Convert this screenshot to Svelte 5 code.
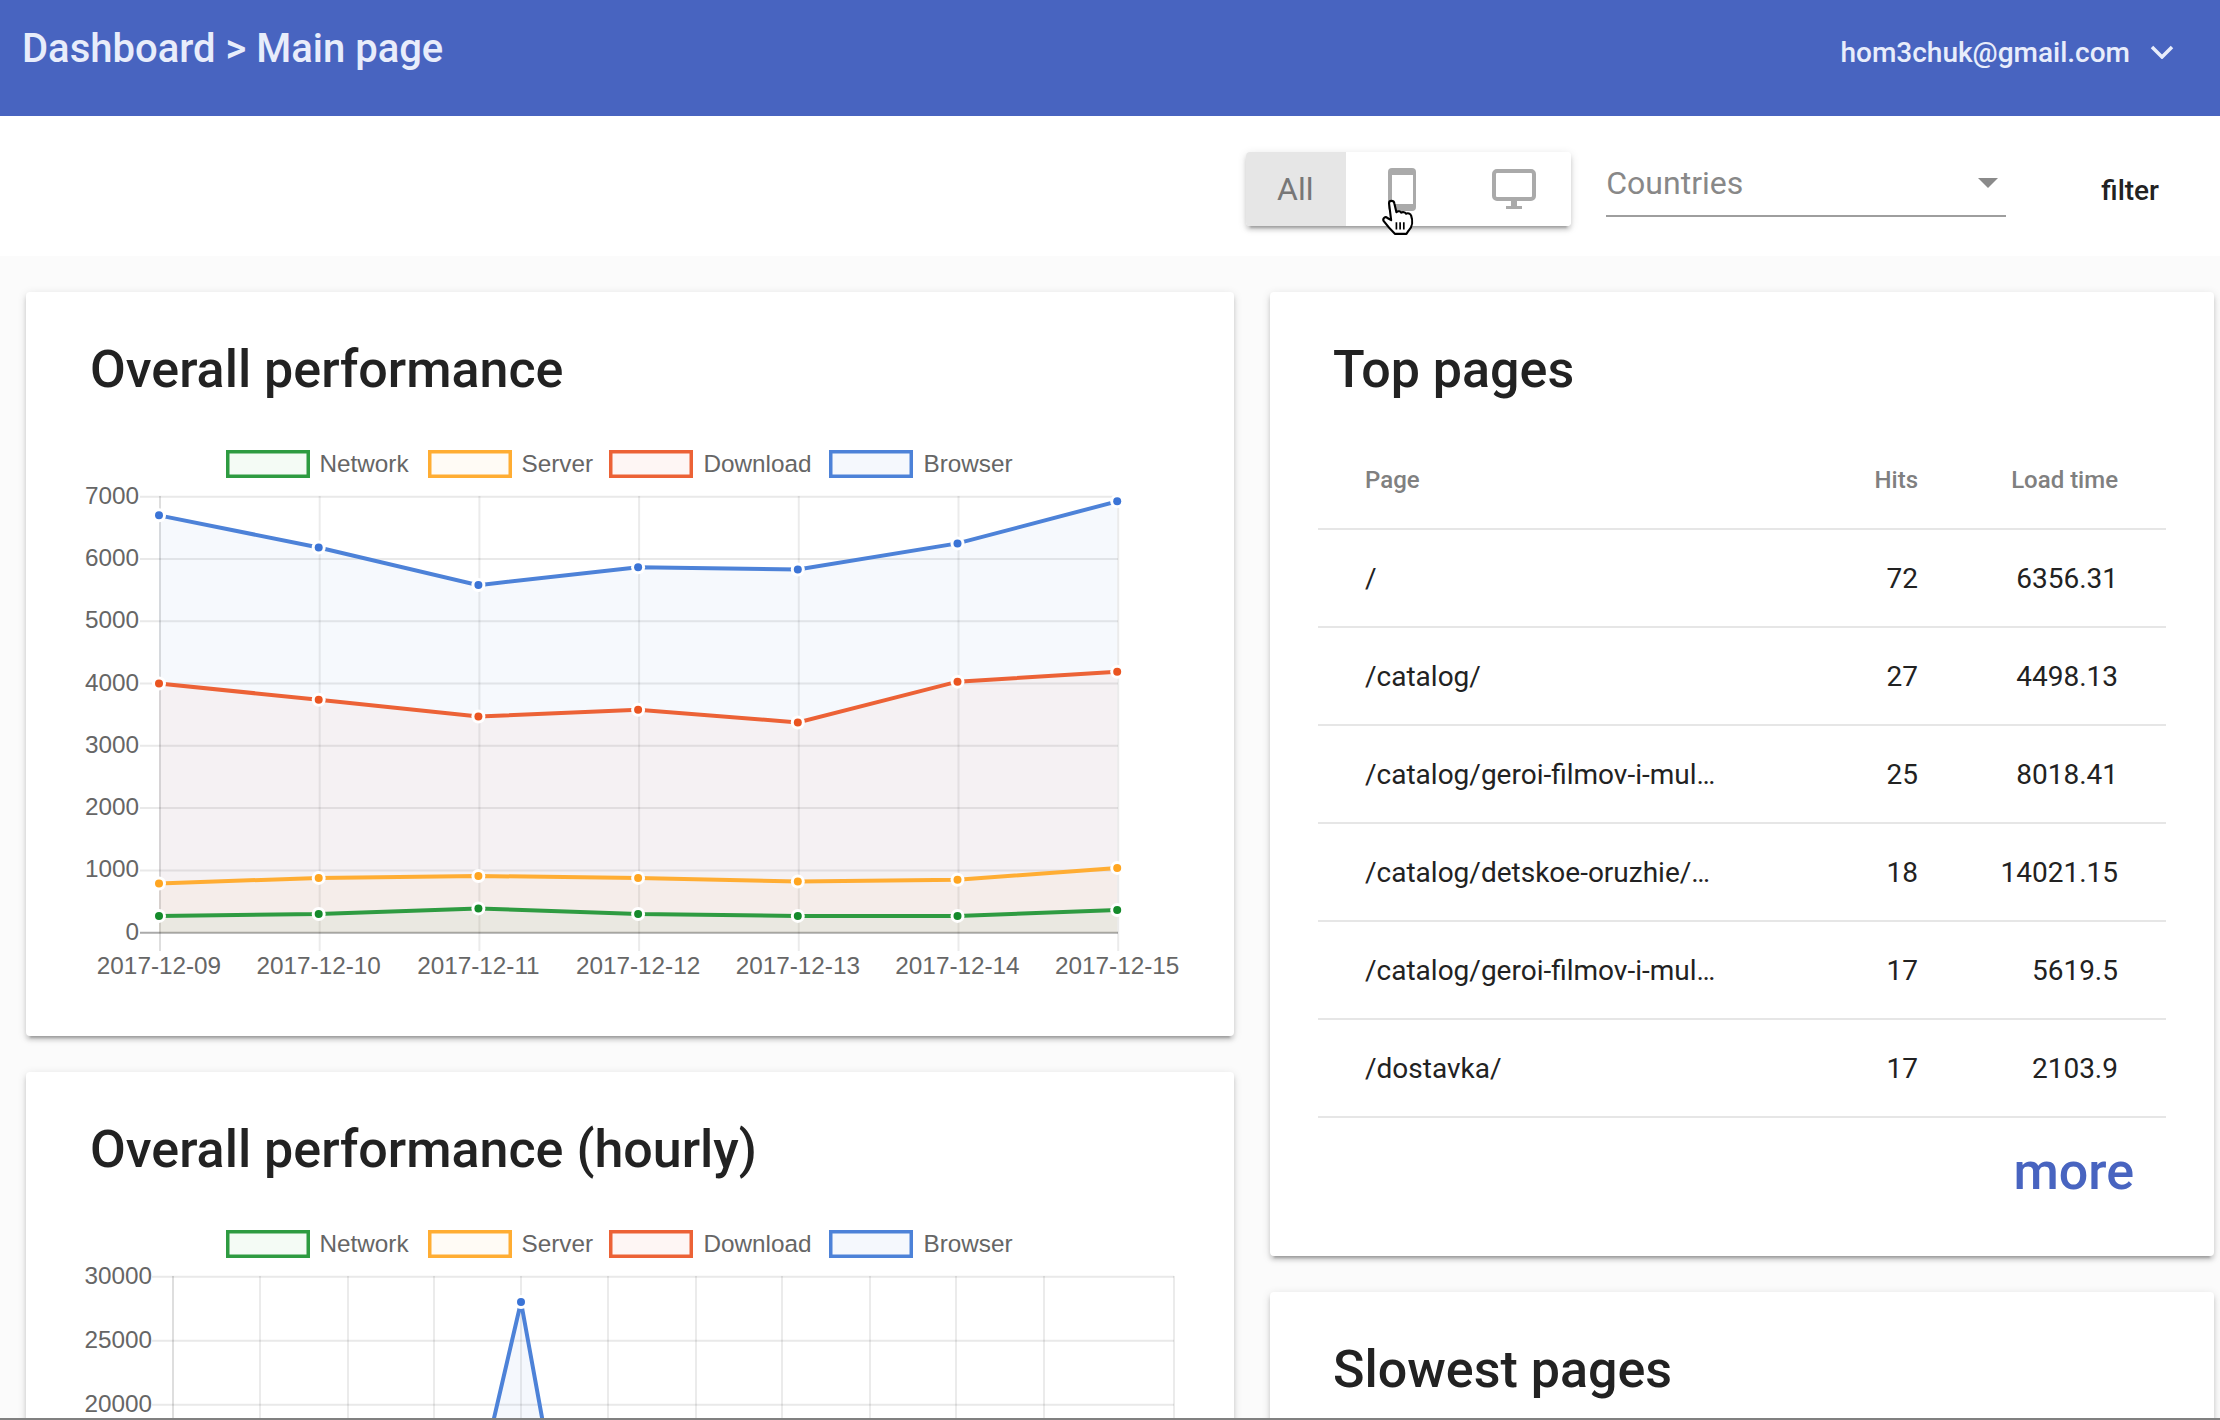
<script>
  const fechas = ['2017-12-09', '2017-12-10', '2017-12-11', '2017-12-12', '2017-12-13', '2017-12-14', '2017-12-15'];

  const series = [
    { nombre: 'Network', color: '#2e9b41', punto: '#148a2a', fondo: '#f4fbf5', valores: [270, 300, 390, 300, 270, 270, 365] },
    { nombre: 'Server', color: '#ffad33', punto: '#ffa520', fondo: '#fffbf5', valores: [790, 880, 910, 880, 820, 850, 1040] },
    { nombre: 'Download', color: '#ec6236', punto: '#ea5420', fondo: '#fef6f4', valores: [4000, 3740, 3470, 3580, 3375, 4030, 4190] },
    { nombre: 'Browser', color: '#4d82d8', punto: '#3b74d6', fondo: '#f5f8fd', valores: [6700, 6185, 5580, 5865, 5830, 6250, 6925] }
  ];

  // leyenda comun a las dos graficas
  const leyenda = [
    { caja: 200, texto: 293.5, s: series[0] },
    { caja: 402, texto: 495.5, s: series[1] },
    { caja: 583, texto: 677.5, s: series[2] },
    { caja: 803, texto: 897.5, s: series[3] }
  ];

  // grafica diaria
  const y0 = 492.7;
  const escala = 0.06229;
  const marcas = [0, 1000, 2000, 3000, 4000, 5000, 6000, 7000];
  const xDia = (i) => 134 + i * 159.7;
  const yDia = (v) => y0 - v * escala;
  const linea = (valores) => valores.map((v, i) => `${xDia(i) - 1},${yDia(v)}`).join(' ');
  const area = (valores) => `${xDia(0) - 1},${y0} ${linea(valores)} ${xDia(6) - 1},${y0}`;

  // grafica por horas
  const verticales = [147, 234, 322, 408, 495, 582, 670, 756, 844, 930, 1018, 1148];
  const marcasHora = [
    { texto: '30000', y: 56.7 },
    { texto: '25000', y: 120.7 },
    { texto: '20000', y: 184.7 }
  ];

  const filas = [
    { pagina: '/', hits: 72, tiempo: '6356.31' },
    { pagina: '/catalog/', hits: 27, tiempo: '4498.13' },
    { pagina: '/catalog/geroi-filmov-i-mul…', hits: 25, tiempo: '8018.41' },
    { pagina: '/catalog/detskoe-oruzhie/…', hits: 18, tiempo: '14021.15' },
    { pagina: '/catalog/geroi-filmov-i-mul…', hits: 17, tiempo: '5619.5' },
    { pagina: '/dostavka/', hits: 17, tiempo: '2103.9' }
  ];
</script>

<div class="page">
  <header class="topbar">
    <div class="crumbs">Dashboard &gt; Main page</div>
    <div class="user">
      <span>hom3chuk@gmail.com</span>
      <svg class="chevron" width="24" height="14" viewBox="0 0 24 14">
        <path d="M2 2 L12 12 L22 2" fill="none" stroke="#e8edfb" stroke-width="3.5" />
      </svg>
    </div>
  </header>

  <div class="toolbar">
    <div class="segments">
      <div class="seg all">All</div>
      <div class="seg">
        <svg width="28" height="43" viewBox="0 0 28 43">
          <rect width="28" height="43" rx="4" fill="#aaa" />
          <rect x="4" y="7" width="21" height="29" fill="#fff" />
        </svg>
      </div>
      <div class="seg">
        <svg width="44" height="40" viewBox="0 0 44 40">
          <rect x="2" y="2" width="40" height="28" rx="3" fill="#fff" stroke="#aaa" stroke-width="4" />
          <rect x="19" y="32" width="6" height="5" fill="#aaa" />
          <rect x="14" y="37" width="16" height="3" fill="#aaa" />
        </svg>
      </div>
    </div>
    <div class="select">
      <span>Countries</span>
      <i class="arrow"></i>
    </div>
    <button class="filter">filter</button>
  </div>

  <main class="columns">
    <div class="left">
      <section class="card daily">
        <h2>Overall performance</h2>
        <svg class="chart" width="1208" height="596" viewBox="0 0 1208 596">
          {#each leyenda as l}
            <rect x={l.caja + 1.75} y="11.75" width="80.5" height="24.5" fill={l.s.fondo} stroke={l.s.color} stroke-width="3.5" />
            <text class="lbl" x={l.texto} y="32">{l.s.nombre}</text>
          {/each}

          {#each marcas as m}
            <line x1="114" x2="1092" y1={yDia(m)} y2={yDia(m)} stroke={m === 0 ? '#aaaaaa' : '#e9e9e9'} stroke-width="2" />
            <text class="lbl" x="113" y={yDia(m) + 7} text-anchor="end">{m}</text>
          {/each}
          {#each fechas as f, i}
            <line x1={xDia(i)} x2={xDia(i)} y1="56" y2="511" stroke="#000" stroke-opacity={i === 0 ? 0.13 : 0.08} stroke-width="2" />
            <text class="lbl" x={xDia(i) - 1} y="534" text-anchor="middle">{f}</text>
          {/each}

          {#each series as s}
            <polygon points={area(s.valores)} fill={s.color} fill-opacity="0.05" />
          {/each}
          {#each series as s}
            <polyline points={linea(s.valores)} fill="none" stroke={s.color} stroke-width="4" />
            {#each s.valores as v, i}
              <circle cx={xDia(i) - 1} cy={yDia(v)} r="7" fill="#fff" />
              <circle cx={xDia(i) - 1} cy={yDia(v)} r="4" fill={s.punto} />
            {/each}
          {/each}
        </svg>
      </section>

      <section class="card hourly">
        <h2>Overall performance (hourly)</h2>
        <svg class="chart" width="1208" height="300" viewBox="0 0 1208 300">
          {#each leyenda as l}
            <rect x={l.caja + 1.75} y="11.75" width="80.5" height="24.5" fill={l.s.fondo} stroke={l.s.color} stroke-width="3.5" />
            <text class="lbl" x={l.texto} y="32">{l.s.nombre}</text>
          {/each}

          {#each marcasHora as m}
            <line x1="126" x2="1148" y1={m.y} y2={m.y} stroke="#e9e9e9" stroke-width="2" />
            <text class="lbl" x="126" y={m.y + 7} text-anchor="end">{m.texto}</text>
          {/each}
          <line x1="126" x2="1148" y1="248.7" y2="248.7" stroke="#e9e9e9" stroke-width="2" />
          {#each verticales as x, i}
            <line x1={x} x2={x} y1="56" y2="300" stroke="#000" stroke-opacity={i === 0 ? 0.13 : 0.08} stroke-width="2" />
          {/each}

          <polygon points="449,280 495,82 531,280" fill="#4d82d8" fill-opacity="0.06" />
          <polyline points="449,280 495,82 531,280" fill="none" stroke="#4d82d8" stroke-width="4" />
          <circle cx="495" cy="82" r="7" fill="#fff" />
          <circle cx="495" cy="82" r="4" fill="#3b74d6" />
        </svg>
      </section>
    </div>

    <div class="right">
      <section class="card top">
        <h2>Top pages</h2>
        <table>
          <thead>
            <tr>
              <th class="pagina">Page</th>
              <th class="num">Hits</th>
              <th class="num tiempo">Load time</th>
            </tr>
          </thead>
          <tbody>
            {#each filas as fila}
              <tr>
                <td class="pagina">{fila.pagina}</td>
                <td class="num">{fila.hits}</td>
                <td class="num tiempo">{fila.tiempo}</td>
              </tr>
            {/each}
          </tbody>
        </table>
        <div class="more"><span>more</span></div>
      </section>

      <section class="card slowest">
        <h2>Slowest pages</h2>
      </section>
    </div>
  </main>

  <!-- cursor de la captura -->
  <svg class="hand" width="34" height="38" viewBox="0 0 32 36">
    <path d="M7.5 4 C7.5 1 12 1 12.5 4 L14.5 12.5 C16 11 18.5 11.5 19 13 C20.5 12 23 12.5 23.5 14 C25 13 28 13.5 28.5 16 C30 20 30 26 26 30 L24 33 L13 33 C10 30 7 27 2.5 21 C1 18.5 4 16 6 18 L9.5 20 Z" fill="#fff" stroke="#000" stroke-width="2" stroke-linejoin="round" />
    <path d="M14.5 22 V29 M18 22 V29 M21.5 22 V29" stroke="#000" stroke-width="1.6" fill="none" />
  </svg>

  <div class="edge"></div>
</div>

<style>
  :global(body) {
    margin: 0;
    background: #fbfbfb;
  }

  .page {
    position: relative;
    height: 1420px;
    overflow: hidden;
    font-family: Roboto, sans-serif;
    background: #fbfbfb;
  }

  .topbar {
    display: flex;
    justify-content: space-between;
    height: 116px;
    background: #4864c0;
    color: #e8edfb;
    font-weight: 500;
  }

  .crumbs {
    margin: 25px 0 0 22px;
    font-size: 40px;
    line-height: 48px;
  }

  .user {
    display: flex;
    align-items: center;
    gap: 20px;
    height: 104px;
    padding-right: 46px;
    font-size: 28px;
  }

  .toolbar {
    display: flex;
    justify-content: flex-end;
    align-items: flex-start;
    height: 140px;
    padding-right: 45px;
    box-sizing: border-box;
    background: #fff;
  }

  .segments {
    display: flex;
    margin-top: 36px;
    height: 74px;
    border-radius: 4px;
    overflow: hidden;
    box-shadow: 0 4px 4px rgba(0, 0, 0, 0.14), 0 6px 2px -4px rgba(0, 0, 0, 0.2), 0 2px 10px rgba(0, 0, 0, 0.12);
  }

  .seg {
    display: flex;
    align-items: center;
    justify-content: center;
    width: 112.5px;
    padding-right: 2px;
    box-sizing: border-box;
    background: #fff;
  }

  .seg.all {
    width: 100px;
    background: #e6e6e6;
    color: #777;
    font-size: 32px;
  }

  .select {
    position: relative;
    width: 400px;
    height: 55px;
    margin: 44px 0 0 35px;
    border-bottom: 2px solid #9e9e9e;
    color: #888;
    font-size: 32px;
    line-height: 46px;
  }

  .arrow {
    position: absolute;
    right: 8px;
    top: 18px;
    width: 0;
    height: 0;
    border-left: 10px solid transparent;
    border-right: 10px solid transparent;
    border-top: 10px solid #8a8a8a;
  }

  .filter {
    margin: 49px 0 0 79px;
    padding: 0 16px;
    height: 50px;
    border: none;
    background: none;
    color: #222;
    font-family: inherit;
    font-size: 28px;
    font-weight: 500;
  }

  .columns {
    display: flex;
    gap: 36px;
    padding: 36px 6px 0 26px;
  }

  .left, .right {
    display: flex;
    flex-direction: column;
    gap: 36px;
  }

  .left {
    width: 1208px;
  }

  .right {
    width: 944px;
  }

  .card {
    background: #fff;
    border-radius: 4px;
    box-shadow: 0 4px 4px rgba(0, 0, 0, 0.14), 0 6px 2px -4px rgba(0, 0, 0, 0.2), 0 2px 10px rgba(0, 0, 0, 0.12);
  }

  .card h2 {
    margin: 0;
    padding: 50px 0 0 64px;
    color: #222;
    font-size: 52px;
    font-weight: 500;
    line-height: 56px;
  }

  .right .card h2 {
    padding-left: 63px;
  }

  .daily {
    height: 744px;
  }

  .slowest {
    height: 400px;
  }

  .chart {
    display: block;
    margin-top: 42px;
  }

  .lbl {
    fill: #666;
    font-family: "Liberation Sans", Arial, sans-serif;
    font-size: 24.3px;
  }

  .top {
    height: 964px;
  }

  table {
    width: 848px;
    margin: 34px 0 0 48px;
    border-collapse: separate;
    border-spacing: 0;
    table-layout: fixed;
  }

  th, td {
    height: 98px;
    padding: 0;
    box-sizing: border-box;
    border-bottom: 2px solid #e6e6e6;
    text-align: right;
    font-size: 28px;
    color: #222;
  }

  th {
    font-size: 24px;
    font-weight: 500;
    color: #808080;
  }

  .pagina {
    width: 482px;
    padding-left: 47px;
    text-align: left;
  }

  .num {
    width: 118px;
  }

  .tiempo {
    width: 248px;
    padding-right: 48px;
  }

  .more {
    display: flex;
    justify-content: flex-end;
    padding: 24px 80px 0 0;
    color: #4864c0;
    font-size: 52px;
    font-weight: 500;
    line-height: 60px;
  }

  .hand {
    position: absolute;
    left: 1381px;
    top: 199px;
  }

  .edge {
    position: absolute;
    left: 0;
    right: 0;
    bottom: 0;
    height: 2px;
    background: #808080;
  }
</style>
